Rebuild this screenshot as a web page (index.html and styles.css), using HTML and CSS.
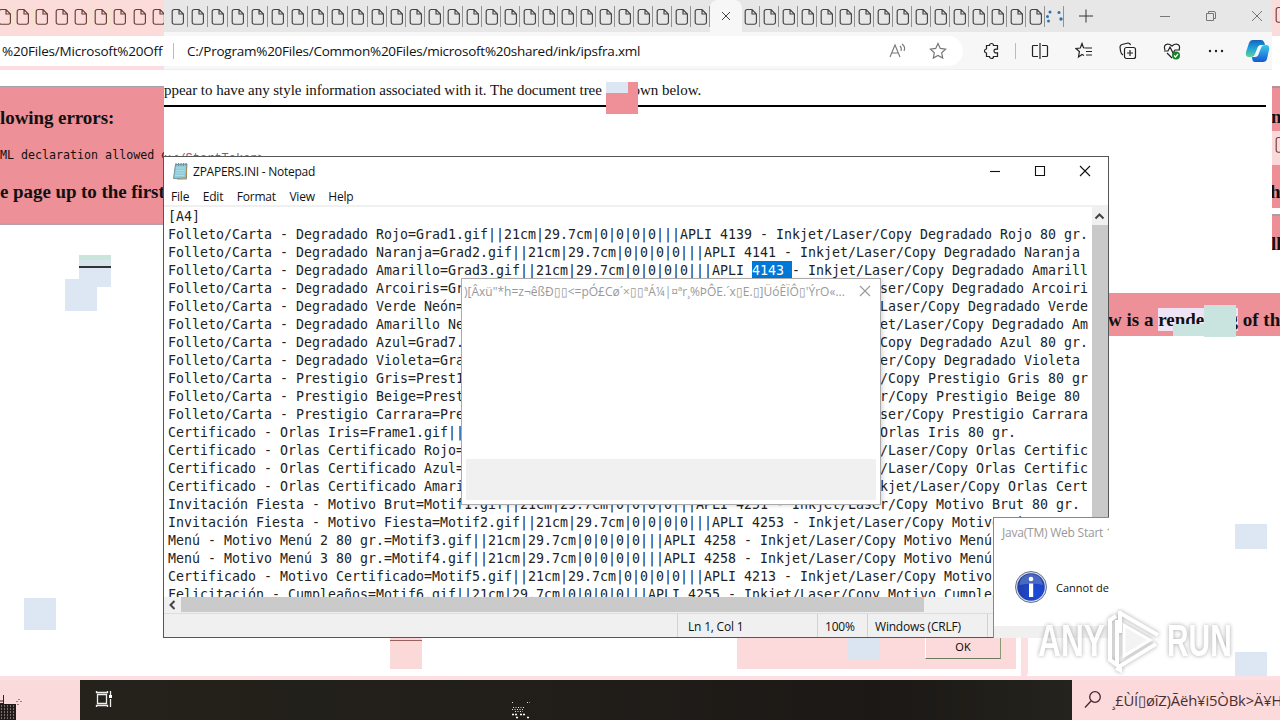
FILE: index.html
```html
<!DOCTYPE html>
<html lang="en">
<head>
<meta charset="utf-8">
<title>ZPAPERS.INI - Notepad</title>
<link rel="stylesheet" href="styles.css">
</head>
<body>
<svg width="0" height="0" class="defs"><defs>
<symbol id="doc" viewBox="0 0 14 18"><path d="M3.200 1.500H8L12.400 6v8.200a2 2 0 0 1-2 2H3.200a2 2 0 0 1-2-2V3.500a2 2 0 0 1 2-2zM8 1.800V6h4.200" fill="none" stroke="currentColor" stroke-width="1.150"/></symbol>
</defs></svg>
<main class="desktop">
  <section class="browser">
    <div class="tabs" id="tabs"></div>
    <div class="toolbar">
      <div class="address"><i class="divider"></i><span class="url">C:/Program%20Files/Common%20Files/microsoft%20shared/ink/ipsfra.xml</span>
        <svg class="read" width="18" height="18" viewBox="0 0 18 18"><path d="M1 15L6 3l5 12M3 11h6M11 4q2 2 1 5M13 2q4 3 2 7" fill="none" stroke="#777" stroke-width="1.1"/></svg>
        <svg class="star" width="18" height="18" viewBox="0 0 18 18"><path d="M9 1.500l2.300 4.900 5.300.7-3.900 3.700 1 5.300L9 13.500l-4.700 2.600 1-5.300L1.400 7.100l5.300-.7z" fill="none" stroke="#777" stroke-width="1.2"/></svg>
      </div>
      <div class="tools">
        <svg width="18" height="18" viewBox="0 0 18 18"><path d="M3.500 3.500h3a2 2 0 0 1 4 0h4v3.700q-3.500-.5-3.500 1.800t3.500 1.800v3.700h-4a2 2 0 0 1-4 0h-3v-3.500a2 2 0 0 1 0-4z"/></svg>
        <i class="divider"></i>
        <svg width="18" height="18" viewBox="0 0 18 18"><path d="M7 3.500H2.500q-1 0-1 1v9q0 1 1 1H7M11 3.500h4.500q1 0 1 1v9q0 1-1 1H11M9 1v16"/></svg>
        <svg width="18" height="18" viewBox="0 0 18 18"><path d="M11 6L8.500 5.800 7 1.500 5.300 6 1 6.500l3.400 3L3.500 15 7 12.500l2 1M10 6h7M11 9.500h6M11 13h6"/></svg>
        <svg width="18" height="18" viewBox="0 0 18 18"><path d="M7.500 5.500h7a2 2 0 0 1 2 2v7a2 2 0 0 1-2 2h-7a2 2 0 0 1-2-2v-7a2 2 0 0 1 2-2zM11 8v6M8 11h6M4 13Q2 12 1.500 9L1 5q0-2 2-2.500L9 1q2 0 2.500 2"/></svg>
        <svg width="18" height="18" viewBox="0 0 18 18"><path d="M2 8q-2-5 2.500-6Q7 2 9 4q2-2 4.500-2Q18 3 16 8M1 9h4l2-4 3 6 2-3h5M4 11l5 5"/><circle cx="13" cy="13.500" r="4" class="ok-dot"/><path d="M11 13.500l1.500 1.500 2.500-3" stroke="#fff"/></svg>
        <svg width="18" height="18" viewBox="0 0 18 18" class="more"><circle cx="3" cy="9" r="1.200"/><circle cx="9" cy="9" r="1.200"/><circle cx="15" cy="9" r="1.200"/></svg>
        <svg width="26" height="26" viewBox="0 0 26 26" class="copilot"><defs><linearGradient id="cg" x2="0" y2="1"><stop stop-color="#1763bd"/><stop offset=".5" stop-color="#20a3d8"/><stop offset="1" stop-color="#5fd29a"/></linearGradient><linearGradient id="cb" x2="0" y2="1"><stop stop-color="#38cbe8"/><stop offset="1" stop-color="#1557d6"/></linearGradient></defs><path d="M8 2h8q3 0 4 5h-4q-3 0-4 4l-2 5q-1 3-4 3H4q-4 0-3-5L4 5q1-3 4-3z" fill="url(#cg)"/><path d="M18 24h-8q-3 0-3-5h3q3 0 4-4l2-5q1-3 4-3h2q3 1 2 5l-2 9q-1 3-4 3z" fill="url(#cb)"/></svg>
      </div>
    </div>
    <p class="notice">ppear to have any style information associated with it. The document tree is shown below.</p>
    <hr class="rule">
    <pre class="leftover">x&lt;/StartToken&gt;</pre>
  </section>
  <div class="window-buttons">
    <svg width="22" height="22" viewBox="0 0 22 22"><path d="M11 4.500v13M4 11h14" stroke="#333"/></svg>
    <svg width="12" height="12" viewBox="0 0 12 12"><path d="M1 6.500h10"/></svg>
    <svg width="12" height="12" viewBox="0 0 12 12"><path d="M1.500 3.500h7v7h-7zM3.500 3V1.500H9Q10.500 1.500 10.500 3v5.500H9"/></svg>
    <svg width="12" height="12" viewBox="0 0 12 12"><path d="M1 1l10 10M11 1L1 11"/></svg>
  </div>

  <aside class="strip">
    <div class="strip-tabs" id="strip-tabs"></div>
    <div class="strip-url">%20Files/Microsoft%20Off</div>
    <div class="strip-line"></div>
    <div class="errors">
      <h3>lowing errors:</h3>
      <pre>ML declaration allowed o</pre>
      <h3>e page up to the first</h3>
    </div>
  </aside>
  <aside class="edge">
    <div class="edge-tab"><svg width="14" height="18"><use href="#doc"/></svg></div>
    <div class="edge-red e1">n</div>
    <div class="edge-light"><svg width="14" height="18"><use href="#doc"/></svg></div>
    <div class="edge-red e2">h</div>
    <div class="edge-red e3">ll</div>
  </aside>
  <div class="render-note">w is a <span>rendering</span> of the</div>
  <i class="block mint m1"></i><i class="block mint m2"></i>
  <i class="block tile-red"></i><i class="block tile-top"></i>
  <i class="block b1"></i><i class="block b2"></i><i class="block b3"></i><i class="block b4"></i><i class="block b5"></i><i class="block b6"></i>
  <div class="pink-dialog"><i></i><button>OK</button></div>

  <section class="notepad">
    <header><svg width="17" height="18" viewBox="0 0 17 18"><path d="M3.500 2.500L15 2l-1 14-12.500.5z" fill="#91cbd9" stroke="#6b969f"/><path d="M4 6h9M4 8.500h9M3.500 11h9M3 13.500h9" stroke="#a9dce8"/><path d="M4 1v3M6.500 1v3M9 1v3M11.500 1v3M14 1v3" stroke="#7b8a8c"/><path d="M14.500 5v12H5" stroke="#a98657" fill="none"/></svg>
      <span>ZPAPERS.INI - Notepad</span>
      <div class="np-buttons"><svg width="12" height="12"><path d="M1 6.500h10"/></svg><svg width="12" height="12"><path d="M1.500 1.500h9v9h-9z"/></svg><svg width="12" height="12"><path d="M1 1l10 10M11 1L1 11"/></svg></div>
    </header>
    <nav><span>File</span><span>Edit</span><span>Format</span><span>View</span><span>Help</span></nav>
    <div class="editor">
<pre>[A4]
Folleto/Carta - Degradado Rojo=Grad1.gif||21cm|29.7cm|0|0|0|0|||APLI 4139 - Inkjet/Laser/Copy Degradado Rojo 80 gr.
Folleto/Carta - Degradado Naranja=Grad2.gif||21cm|29.7cm|0|0|0|0|||APLI 4141 - Inkjet/Laser/Copy Degradado Naranja
Folleto/Carta - Degradado Amarillo=Grad3.gif||21cm|29.7cm|0|0|0|0|||APLI <mark>4143 </mark>- Inkjet/Laser/Copy Degradado Amarill
Folleto/Carta - Degradado Arcoiris=Grad4.gif||21cm|29.7cm|0|0|0|0|||APLI 4145 - Inkjet/Laser/Copy Degradado Arcoiri
Folleto/Carta - Degradado Verde Neón=Grad5.gif||21cm|29.7cm|0|0|0|0|||APLI 4147 - Inkjet/Laser/Copy Degradado Verde
Folleto/Carta - Degradado Amarillo Neón=Grad6.gif||21cm|29.7cm|0|0|0|0|||APLI 4149 - Inkjet/Laser/Copy Degradado Am
Folleto/Carta - Degradado Azul=Grad7.gif||21cm|29.7cm|0|0|0|0|||APLI 4151 - Inkjet/Laser/Copy Degradado Azul 80 gr.
Folleto/Carta - Degradado Violeta=Grad8.gif||21cm|29.7cm|0|0|0|0|||APLI 4153 - Inkjet/Laser/Copy Degradado Violeta
Folleto/Carta - Prestigio Gris=Prest1.gif||21cm|29.7cm|0|0|0|0|||APLI 4155 - Inkjet/Laser/Copy Prestigio Gris 80 gr
Folleto/Carta - Prestigio Beige=Prest2.gif||21cm|29.7cm|0|0|0|0|||APLI 4157 - Inkjet/Laser/Copy Prestigio Beige 80
Folleto/Carta - Prestigio Carrara=Prest3.gif||21cm|29.7cm|0|0|0|0|||APLI 4159 - Inkjet/Laser/Copy Prestigio Carrara
Certificado - Orlas Iris=Frame1.gif||21cm|29.7cm|0|0|0|0|||APLI 4201 - Inkjet/Laser/Copy Orlas Iris 80 gr.
Certificado - Orlas Certificado Rojo=Frame2.gif||21cm|29.7cm|0|0|0|0|||APLI 4203 - Inkjet/Laser/Copy Orlas Certific
Certificado - Orlas Certificado Azul=Frame3.gif||21cm|29.7cm|0|0|0|0|||APLI 4205 - Inkjet/Laser/Copy Orlas Certific
Certificado - Orlas Certificado Amarillo=Frame4.gif||21cm|29.7cm|0|0|0|0|||APLI 4207 - Inkjet/Laser/Copy Orlas Cert
Invitación Fiesta - Motivo Brut=Motif1.gif||21cm|29.7cm|0|0|0|0|||APLI 4251 - Inkjet/Laser/Copy Motivo Brut 80 gr.
Invitación Fiesta - Motivo Fiesta=Motif2.gif||21cm|29.7cm|0|0|0|0|||APLI 4253 - Inkjet/Laser/Copy Motivo Fiesta 80
Menú - Motivo Menú 2 80 gr.=Motif3.gif||21cm|29.7cm|0|0|0|0|||APLI 4258 - Inkjet/Laser/Copy Motivo Menú 2 80 gr.
Menú - Motivo Menú 3 80 gr.=Motif4.gif||21cm|29.7cm|0|0|0|0|||APLI 4258 - Inkjet/Laser/Copy Motivo Menú 3 80 gr.
Certificado - Motivo Certificado=Motif5.gif||21cm|29.7cm|0|0|0|0|||APLI 4213 - Inkjet/Laser/Copy Motivo Certificado
Felicitación - Cumpleaños=Motif6.gif||21cm|29.7cm|0|0|0|0|||APLI 4255 - Inkjet/Laser/Copy Motivo Cumpleaños 80 gr.</pre>
      <div class="vscroll"><svg width="16" height="18"><path d="M3.500 11.500L7.500 7.500l4 4"/></svg></div>
    </div>
    <div class="hscroll"><svg width="17" height="16"><path d="M10.500 4l-4 4 4 4"/></svg><i></i></div>
    <footer><span class="s1">Ln 1, Col 1</span><span class="s2">100%</span><span class="s3">Windows (CRLF)</span><span class="s4"></span></footer>
  </section>

  <section class="popup">
    <header><span>)[Âxü"*h=z¬êßÐ▯▯&lt;=pÓ£Cø´×▯▯ªÁ¼|¤ªr¸%ÞÔE.´x▯E.▯]ÜóÊÏÔ▯'ÝrO«...</span><svg width="12" height="12"><path d="M1 1l10 10M11 1L1 11"/></svg></header>
    <div class="popup-foot"></div>
  </section>

  <section class="java">
    <header>Java(TM) Web Start 1</header>
    <div class="message"><svg width="34" height="34" viewBox="0 0 34 34"><defs><radialGradient id="ig" cx=".65" cy=".7" r=".8"><stop stop-color="#194be0"/><stop offset="1" stop-color="#243c9c"/></radialGradient></defs><circle cx="17" cy="17" r="15.500" fill="#d9e0ec" stroke="#68738b"/><circle cx="17" cy="17" r="13.800" fill="url(#ig)"/><path d="M5 15Q7 4 17 4t12 11q-10-3-24 0z" fill="#7291d0" opacity=".5"/><circle cx="17" cy="9" r="2.300" fill="#fff"/><path d="M15 13.500h4.200V27H15z" fill="#fff"/></svg><span>Cannot de</span></div>
    <div class="java-foot"></div>
  </section>

  <div class="watermark"><span>ANY</span><svg width="56" height="66" viewBox="0 0 56 66"><path d="M10 8L4 12v40l7 5V12M14 3v22M14 5L52 27M50 36L14 58v4l-4-2" fill="none" stroke="#fff" stroke-width="4"/><path d="M18 17v31l26-16z" fill="#f2f2f2" stroke="#fff" stroke-width="3"/></svg><span>RUN</span></div>

  <footer class="taskbar">
    <div class="task-left"><svg width="22" height="28" viewBox="0 0 22 28"><path d="M0 7h3M3.500 1v9M0 9.500h4" stroke="#30201d" fill="none"/><path d="M0 10h16v16H0z" fill="#211b19"/><path d="M1 12h14M1 15h14M1 18h14M1 21h14M1 24h14" stroke="#d9c4c2" stroke-dasharray="1 2"/><path d="M17 7v1M19 5v1M21 7v1M18 10v1" stroke="#30201d"/></svg></div>
    <div class="task-main"><svg width="18" height="18" viewBox="0 0 18 18"><path d="M2.500 4.500h9v9h-9zM1.500 1v1.500h11V1M1.500 17v-1.500h11V17M15.500 1v4M15.500 9v8" fill="none" stroke="#eee" stroke-width="1.300"/><path d="M14 5h3v3h-3z" fill="#fff"/></svg>
      <svg class="noise" width="20" height="20" viewBox="0 0 20 20"><path d="M0 2.500h2M15 2.500h3M1 7.500h12M0 9.500h12M3 11.500h8" stroke="#e0e0d8" stroke-dasharray="1 1.500"/><path d="M0 14.500h6M8 14.500h5M4 17.500h3M15 17.500h3" stroke="#fff" stroke-width="1.500" stroke-dasharray="2 1"/></svg></div>
    <div class="task-search"><svg width="18" height="20" viewBox="0 0 18 20"><circle cx="11" cy="7" r="5.300"/><path d="M7 11l-6 6.500"/></svg><span>¸£ÙÍ▯øîZ)Ãëh¥i5ÒBk&gt;Ä¥H</span></div>
  </footer>
</main>
<script src="tabs.js"></script>
</body>
</html>
```
FILE: styles.css
```css
* { box-sizing: border-box; }
body { margin: 0; }
svg, i { display: block; flex: none; }
.defs { position: absolute; }
h3, p, pre { margin: 0; }
.desktop { position: relative; width: 1280px; height: 720px; overflow: hidden; background: #fff; font: 12px "Open Sans", sans-serif; color: #111; white-space: nowrap; }
.browser { position: absolute; left: 164px; top: 0; width: 1108px; height: 680px; overflow: hidden; }
.tabs { display: flex; height: 32px; background: #e7e7e7; padding-left: 4px; }
.tab { width: 19px; height: 21px; margin-top: 6px; padding-left: 1px; border-right: 1px solid #929292; display: flex; justify-content: center; align-items: center; color: #444; flex: none; }
.tab.wide { width: 20px; }
.tab.active { width: 32px; height: 32px; margin: 0 -1px 0 0; padding: 0 1px 0 0; border: 0; border-radius: 8px 8px 0 0; background: #f7f7f7; }
.tab.active svg, .window-buttons svg { fill: none; stroke: #777; }
.tab.active svg { stroke: #444; }
.toolbar { height: 38px; display: flex; background: #f7f7f7; border-bottom: 1px solid #eee; }
.address { flex: none; width: 799px; height: 30px; margin-top: 4px; background: #fff; border-radius: 0 15px 15px 0; display: flex; align-items: center; }
.divider { width: 1px; height: 16px; background: #bbb; }
.address .divider { margin-left: 9px; }
.url { flex: none; margin-left: 13px; width: 702px; font-size: 13.500px; letter-spacing: -.24px; }
.star { margin-left: 22px; }
.tools { display: flex; align-items: center; padding-left: 20px; flex: none; }
.tools svg { fill: none; stroke: #222; stroke-width: 1.2; margin-right: 26px; }
.tools svg:first-child { margin-right: 14px; }
.tools .divider { margin-right: 15px; }
.tools svg.more { fill: #222; stroke: none; margin-right: 20px; }
.tools .copilot { stroke: none; margin: 0; }
.tools .ok-dot { fill: #168329; stroke: none; }
.notice { font: 15px/20px "Liberation Serif", serif; margin-top: 10px; letter-spacing: -.035px; }
.rule { border: 0; height: 2px; background: #000; margin: 5px 6px 0 0; }
.leftover { font: 12px/14px "Liberation Mono", monospace; margin-top: 45px; color: #935476; }
.window-buttons { position: absolute; left: 1075px; top: 5px; display: flex; align-items: center; }
.window-buttons svg + svg { margin-left: 62px; }
.window-buttons svg ~ svg ~ svg { margin-left: 34px; }
.strip { position: absolute; left: 0; top: 0; width: 164px; height: 225px; overflow: hidden; }
.strip-tabs { height: 36px; display: flex; background: #fcdbdb; }
.strip-tabs .tab { border-color: #f1e2c8; color: #673e35; width: 19.500px; }
.strip-tabs .tab:first-child { width: 13px; justify-content: flex-end; }
.strip-url { height: 30px; line-height: 30px; font-size: 13.500px; padding-left: 2px; letter-spacing: -.2px; }
.strip-line { height: 4px; background: #fcdde0; }
.errors { height: 139px; margin-top: 16px; background: #ed9097; border-top: 1px solid #a5a0aa; border-bottom: 2px solid #b79fac; font-family: "Liberation Serif", serif; }
.errors h3 { font-size: 19px; line-height: 24px; padding-top: 19px; letter-spacing: -.07px; }
.errors pre { font: 11.650px/14px "DejaVu Sans Mono", monospace; padding-top: 18px; margin-bottom: -1px; }
.edge { position: absolute; left: 1272px; top: 0; width: 8px; height: 260px; overflow: hidden; font: bold 19px "Liberation Serif", serif; }
.edge-tab { height: 36px; background: #fcdbdb; padding: 6px 0 0 3px; color: #753e3a; }
.edge-red { background: #ee8f98; }
.e1 { margin-top: 50px; height: 45px; line-height: 58px; border-top: 2px solid #b48f9c; text-indent: -1px; }
.edge-light { height: 34px; background: #fbd8da; padding: 5px 0 0 3px; color: #753e3a; }
.e2 { height: 43px; line-height: 54px; text-indent: -2px; }
.e3 { margin-top: 6px; height: 36px; border-top: 2px solid #a5a0aa; line-height: 56px; text-indent: -1px; }
.render-note { position: absolute; left: 1108px; top: 293px; width: 172px; height: 43px; overflow: hidden; background: #ed9097; font: bold 19px/54px "Liberation Serif", serif; }
.render-note span { background: #efe4f6; padding: 1px 0; }
.block { position: absolute; width: 32px; height: 32px; background: #dde6f3; }
.block.mint { background: #c9e4df; }
.m1 { left: 1204px; top: 305px; }
.m2 { left: 1173px; top: 324px; height: 12px; }
.block.tile-red { left: 606px; top: 82px; background: #ef8f98; }
.block.tile-top { left: 606px; top: 82px; width: 22px; height: 11px; }
.b1 { left: 65px; top: 279px; }
.b2 { left: 79px; top: 255px; background: linear-gradient(#cae5dc 0 5px, #d6e6e8 5px 11px, #333 11px 13px, #dde6f3 13px); }
.b3 { left: 24px; top: 598px; }
.b4 { left: 1235px; top: 524px; height: 25px; }
.b5 { left: 1235px; top: 652px; height: 25px; }
.block.b6 { left: 390px; top: 637px; background: linear-gradient(#fbd5d7 3px, #99625d 3px 4px, #fbd9d9 4px); }
.pink-dialog { position: absolute; left: 737px; top: 630px; width: 291px; height: 50px; border-right: 7px solid #fcdfe1; background: linear-gradient(#fcdadb 39px, transparent 39px); box-shadow: inset -5px 0 #fff; border-radius: 0 0 8px; }
.pink-dialog i { position: absolute; left: 111px; top: 0; width: 32px; height: 29px; background: #dbe5f1; }
.pink-dialog button { position: absolute; left: 188px; top: 3px; width: 76px; height: 26px; border: 1px solid #fff; border-right-color: #8b9975; border-bottom-color: #6d7c5f; background: #fcdadb; font: 11px "Open Sans", sans-serif; padding: 1px 0 0; }
.notepad { position: absolute; left: 163px; top: 156px; width: 946px; height: 482px; background: #fff; border: 1px solid #565656; display: flex; flex-direction: column; }
.notepad header { height: 30px; display: flex; align-items: center; padding: 0 0 2px 8px; }
.notepad header > span { margin-left: 4px; letter-spacing: -.24px; }
.np-buttons { display: flex; margin-left: auto; padding-right: 17px; gap: 33px; }
.np-buttons svg { fill: none; stroke: #111; stroke-width: 1.1; }
.notepad nav { height: 20px; line-height: 20px; padding-left: 7px; display: flex; gap: 13.500px; border-bottom: 2px solid #f0f0f0; letter-spacing: -.2px; }
.editor { height: 390px; display: flex; overflow: hidden; }
.editor pre { width: 928px; padding: 1px 0 0 4px; overflow: hidden; font: 13.288px/18px "DejaVu Sans Mono", monospace; letter-spacing: .014px; clip-path: inset(0 3px 0 0); color: #222; }
mark { background: #0078d7; color: #fff; padding: 2px 0 1px; }
.vscroll { width: 16px; background: #c9c9c9; }
.vscroll svg { background: #f0f0f0; }
.vscroll path, .hscroll path { fill: none; stroke: #444; stroke-width: 2; }
.hscroll { height: 16px; display: flex; background: #f0f0f0; }
.hscroll i { width: 743px; height: 15px; background: #cacaca; }
.notepad footer { height: 24px; display: flex; line-height: 26px; padding-left: 513px; background: #f0f0f0; border-top: 1px solid #ddd; letter-spacing: -.2px; }
.notepad footer span { border-left: 1px solid #d2d2d2; }
.s1 { width: 140px; padding-left: 10px; }
.s2 { width: 50px; padding-left: 7px; }
.s3 { width: 120px; padding-left: 7px; }
.popup { position: absolute; left: 461px; top: 278px; width: 420px; height: 227px; background: #fff; border: 1px solid #aaa; box-shadow: 2px 1px 4px #0002; display: flex; flex-direction: column; padding: 0 4px 4px; }
.popup header { display: flex; align-items: center; justify-content: space-between; height: 24px; color: #999; padding-right: 5px; margin-left: -2px; }
.popup header svg { stroke: #999; fill: none; stroke-width: 1.1; }
.popup-foot { margin-top: auto; height: 41px; background: #f0f0f0; }
.java { position: absolute; left: 993px; top: 517px; width: 116px; height: 121px; overflow: hidden; background: #fff; border: solid #888; border-width: 1px 0 0 1px; }
.java header { height: 30px; line-height: 30px; padding-left: 8px; color: #999; letter-spacing: -.22px; }
.message { display: flex; align-items: center; height: 78px; padding: 0 0 0 20px; }
.message span { font-size: 11px; margin-left: 8px; }
.java-foot { height: 12px; background: #f0f0f0; }
.watermark { position: absolute; left: 1038px; top: 608px; display: flex; align-items: center; height: 66px; color: #fff; font: bold 44px "Liberation Sans", sans-serif; filter: drop-shadow(0 0 2px #999); opacity: .85; }
.watermark span { transform: scaleX(.72); transform-origin: 0 0; width: 68px; }
.watermark span:last-child { margin-left: 5px; transform: scaleX(.68); }
.taskbar { position: absolute; left: 0; top: 676px; width: 1280px; height: 44px; border-top: 4px solid #fcdfe2; display: flex; }
.task-left { width: 80px; background: #fbdadb; padding-top: 14px; }
.task-main { width: 992px; background: linear-gradient(90deg, #24221b, #211e1a 50%, #1b1815 80%, #24231d); padding: 10px 15px; display: flex; }
.noise { margin: 10px 0 0 399px; }
.task-search { width: 208px; background: #fcdadc; display: flex; align-items: center; color: #4a2d2c; font-size: 14.800px; padding-left: 12px; }
.task-search svg { fill: none; stroke: #422829; stroke-width: 1.3; }
.task-search span { margin-left: 10px; letter-spacing: -.15px; }
```
FILE: tabs.js
```js
const icon = '<svg width="14" height="18"><use href="#doc"/></svg>';
const tab = (kind = '', body = icon) => `<div class="tab ${kind}">${body}</div>`;
const close = '<svg width="10" height="10"><path d="M1 1l8 8M9 1L1 9"/></svg>';
const dots = '<svg width="18" height="16" viewBox="0 0 18 16" fill="#2b72b5"><circle cx="1.500" cy="7.500" r="1.500"/><circle cx="4" cy="3" r="1.500"/><circle cx="2.500" cy="12" r="1.500"/><circle cx="13" cy="3.500" r="1.500"/><circle cx="15" cy="10" r="1.700"/></svg>';
document.getElementById('tabs').innerHTML =
  tab('wide').repeat(10) + tab().repeat(18) + tab('active', close) + tab().repeat(16) + tab('blue', dots);
document.getElementById('strip-tabs').innerHTML = tab().repeat(9);
```
